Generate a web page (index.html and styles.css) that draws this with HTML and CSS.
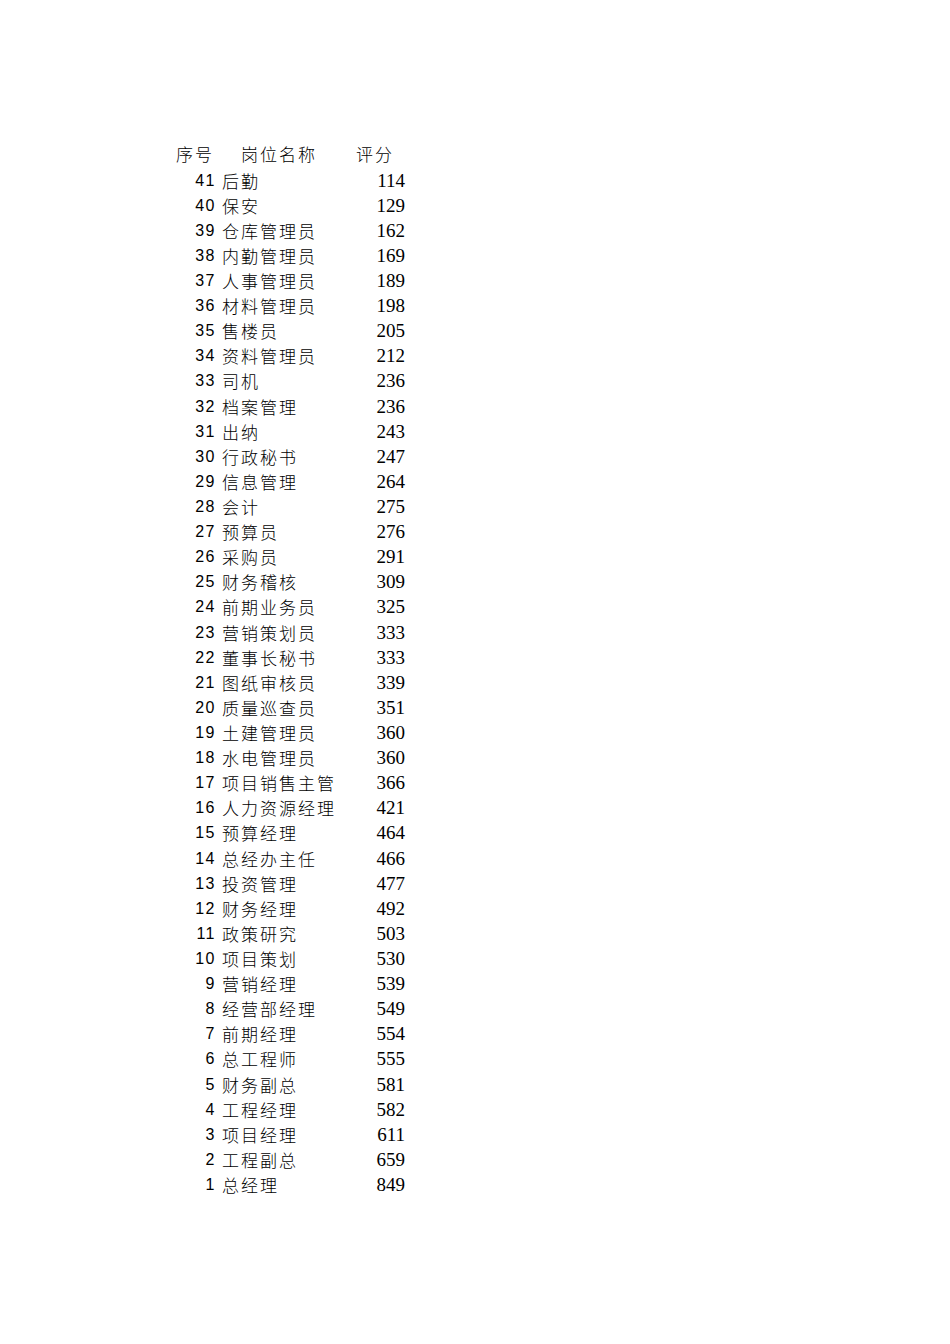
FILE: index.html
```html
<!DOCTYPE html>
<html lang="zh">
<head>
<meta charset="utf-8">
<title>岗位评分</title>
<link rel="stylesheet" href="styles.css">
</head>
<body>
<div class="sheet">
  <div class="row head">
    <div class="c-num">序号</div>
    <div class="c-name">岗位名称</div>
    <div class="c-score">评分</div>
  </div>
  <div class="row"><div class="c-num">41</div><div class="c-name">后勤</div><div class="c-score">114</div></div>
  <div class="row"><div class="c-num">40</div><div class="c-name">保安</div><div class="c-score">129</div></div>
  <div class="row"><div class="c-num">39</div><div class="c-name">仓库管理员</div><div class="c-score">162</div></div>
  <div class="row"><div class="c-num">38</div><div class="c-name">内勤管理员</div><div class="c-score">169</div></div>
  <div class="row"><div class="c-num">37</div><div class="c-name">人事管理员</div><div class="c-score">189</div></div>
  <div class="row"><div class="c-num">36</div><div class="c-name">材料管理员</div><div class="c-score">198</div></div>
  <div class="row"><div class="c-num">35</div><div class="c-name">售楼员</div><div class="c-score">205</div></div>
  <div class="row"><div class="c-num">34</div><div class="c-name">资料管理员</div><div class="c-score">212</div></div>
  <div class="row"><div class="c-num">33</div><div class="c-name">司机</div><div class="c-score">236</div></div>
  <div class="row"><div class="c-num">32</div><div class="c-name">档案管理</div><div class="c-score">236</div></div>
  <div class="row"><div class="c-num">31</div><div class="c-name">出纳</div><div class="c-score">243</div></div>
  <div class="row"><div class="c-num">30</div><div class="c-name">行政秘书</div><div class="c-score">247</div></div>
  <div class="row"><div class="c-num">29</div><div class="c-name">信息管理</div><div class="c-score">264</div></div>
  <div class="row"><div class="c-num">28</div><div class="c-name">会计</div><div class="c-score">275</div></div>
  <div class="row"><div class="c-num">27</div><div class="c-name">预算员</div><div class="c-score">276</div></div>
  <div class="row"><div class="c-num">26</div><div class="c-name">采购员</div><div class="c-score">291</div></div>
  <div class="row"><div class="c-num">25</div><div class="c-name">财务稽核</div><div class="c-score">309</div></div>
  <div class="row"><div class="c-num">24</div><div class="c-name">前期业务员</div><div class="c-score">325</div></div>
  <div class="row"><div class="c-num">23</div><div class="c-name">营销策划员</div><div class="c-score">333</div></div>
  <div class="row"><div class="c-num">22</div><div class="c-name">董事长秘书</div><div class="c-score">333</div></div>
  <div class="row"><div class="c-num">21</div><div class="c-name">图纸审核员</div><div class="c-score">339</div></div>
  <div class="row"><div class="c-num">20</div><div class="c-name">质量巡查员</div><div class="c-score">351</div></div>
  <div class="row"><div class="c-num">19</div><div class="c-name">土建管理员</div><div class="c-score">360</div></div>
  <div class="row"><div class="c-num">18</div><div class="c-name">水电管理员</div><div class="c-score">360</div></div>
  <div class="row"><div class="c-num">17</div><div class="c-name">项目销售主管</div><div class="c-score">366</div></div>
  <div class="row"><div class="c-num">16</div><div class="c-name">人力资源经理</div><div class="c-score">421</div></div>
  <div class="row"><div class="c-num">15</div><div class="c-name">预算经理</div><div class="c-score">464</div></div>
  <div class="row"><div class="c-num">14</div><div class="c-name">总经办主任</div><div class="c-score">466</div></div>
  <div class="row"><div class="c-num">13</div><div class="c-name">投资管理</div><div class="c-score">477</div></div>
  <div class="row"><div class="c-num">12</div><div class="c-name">财务经理</div><div class="c-score">492</div></div>
  <div class="row"><div class="c-num">11</div><div class="c-name">政策研究</div><div class="c-score">503</div></div>
  <div class="row"><div class="c-num">10</div><div class="c-name">项目策划</div><div class="c-score">530</div></div>
  <div class="row"><div class="c-num">9</div><div class="c-name">营销经理</div><div class="c-score">539</div></div>
  <div class="row"><div class="c-num">8</div><div class="c-name">经营部经理</div><div class="c-score">549</div></div>
  <div class="row"><div class="c-num">7</div><div class="c-name">前期经理</div><div class="c-score">554</div></div>
  <div class="row"><div class="c-num">6</div><div class="c-name">总工程师</div><div class="c-score">555</div></div>
  <div class="row"><div class="c-num">5</div><div class="c-name">财务副总</div><div class="c-score">581</div></div>
  <div class="row"><div class="c-num">4</div><div class="c-name">工程经理</div><div class="c-score">582</div></div>
  <div class="row"><div class="c-num">3</div><div class="c-name">项目经理</div><div class="c-score">611</div></div>
  <div class="row"><div class="c-num">2</div><div class="c-name">工程副总</div><div class="c-score">659</div></div>
  <div class="row"><div class="c-num">1</div><div class="c-name">总经理</div><div class="c-score">849</div></div>
</div>
</body>
</html>
```
FILE: styles.css
```css
html, body {
  margin: 0;
  padding: 0;
  background: #ffffff;
}

body {
  color: #000000;
  font-family: "Noto Sans CJK SC", "Noto Sans", sans-serif;
}

.sheet {
  padding: 141px 0 0 176px;
  display: flex;
  flex-direction: column;
}

.row {
  display: grid;
  grid-template-columns: 40px 119px 70px;
  height: 25.12px;
  line-height: 25.12px;
  white-space: nowrap;
}

.row.head {
  height: 26.6px;
}

.c-num {
  font-family: "Liberation Sans", Arial, sans-serif;
  font-size: 16px;
  letter-spacing: 1.5px;
  text-align: right;
}

.c-name {
  font-family: "Noto Sans CJK SC", sans-serif;
  font-size: 17px;
  letter-spacing: 2px;
  padding-left: 6px;
  font-weight: 300;
}

.c-score {
  font-family: "Liberation Serif", "Times New Roman", serif;
  font-size: 19px;
  text-align: right;
}

.head .c-num,
.head .c-name,
.head .c-score {
  font-family: "Noto Sans CJK SC", sans-serif;
  font-size: 17px;
  letter-spacing: 2px;
  font-weight: 300;
  text-align: left;
}

.head .c-num {
  padding-left: 0;
}

.head .c-name {
  padding-left: 25px;
}

.head .c-score {
  padding-left: 21px;
}
```
